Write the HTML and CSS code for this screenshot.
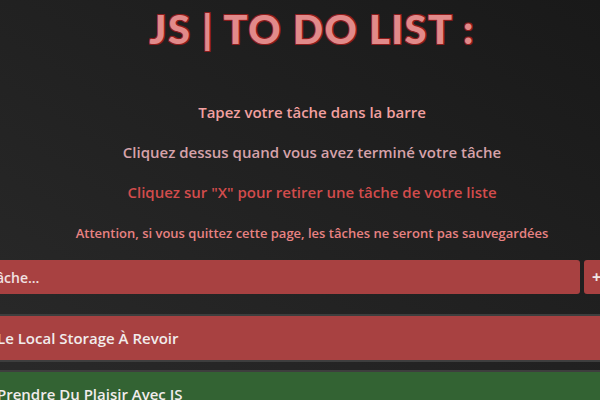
FILE: index.html
```html
<!DOCTYPE html>
<html lang="fr">
<head>
<meta charset="utf-8">
<title>JS | TO DO LIST</title>
<link rel="stylesheet" href="styles.css">
</head>
<body>
<main class="page">
  <header class="intro">
    <h1 class="title">JS | TO DO LIST :</h1>
    <p class="line line-1">Tapez votre tâche dans la barre</p>
    <p class="line line-2">Cliquez dessus quand vous avez terminé votre tâche</p>
    <p class="line line-3">Cliquez sur "X" pour retirer une tâche de votre liste</p>
    <p class="line line-4">Attention, si vous quittez cette page, les tâches ne seront pas sauvegardées</p>
  </header>
  <section class="todo">
    <form class="add-form">
      <input class="add-input" type="text" placeholder="Tâche...">
      <button class="add-btn" type="button">+</button>
    </form>
    <ul class="tasks">
      <li class="task task-todo">Le Local Storage À Revoir</li>
      <li class="task task-done">Prendre Du Plaisir Avec JS</li>
    </ul>
  </section>
</main>
</body>
</html>
```
FILE: styles.css
```css
html, body {
  margin: 0;
  padding: 0;
}
body {
  width: 600px;
  height: 400px;
  overflow: hidden;
  background: linear-gradient(to top right, #2a2a2a 0%, #222 45%, #191919 100%);
  font-family: "Open Sans", "Liberation Sans", sans-serif;
}
.page {
  width: 624px;
}
.intro {
  text-align: center;
}
.title {
  margin: 0;
  padding-top: 7px;
  font-family: Lato, "Open Sans", sans-serif;
  font-weight: 900;
  font-size: 40px;
  line-height: 44px;
  letter-spacing: 1.3px;
  color: #e28a8a;
  text-shadow: 1px 1px 0 #8a1c1c, -1px -1px 0 #8a1c1c, 1px -1px 0 #8a1c1c, -1px 1px 0 #8a1c1c;
}
.line {
  margin: 0;
  font-weight: 600;
  font-size: 15px;
  line-height: 20px;
}
.line-1 {
  margin-top: 51px;
  color: #f2a0a0;
}
.line-2 {
  margin-top: 20px;
  color: #d6a2aa;
}
.line-3 {
  margin-top: 20px;
  color: #d24c4c;
}
.line-4 {
  margin-top: 21px;
  font-size: 13px;
  color: #e88282;
}
.todo {
  margin-left: -22px;
  margin-top: 17px;
}
.add-form {
  display: flex;
  gap: 4px;
  margin: 0;
}
.add-input {
  width: 603px;
  height: 34px;
  box-sizing: border-box;
  border: none;
  border-radius: 3px;
  padding: 0 10px;
  background: #a84141;
  color: #f3e6e6;
  font-family: "Open Sans", "Liberation Sans", sans-serif;
  font-weight: 600;
  font-size: 14px;
}
.add-input::placeholder {
  color: #f1e2e2;
  opacity: 1;
}
.add-btn {
  width: 40px;
  height: 34px;
  border: none;
  border-radius: 3px;
  padding: 0 0 0 8px;
  text-align: left;
  background: #a84141;
  color: #f0e6e6;
  font-family: "Open Sans", "Liberation Sans", sans-serif;
  font-weight: 700;
  font-size: 16px;
}
.tasks {
  list-style: none;
  margin: 20px 0 0;
  padding: 0;
  width: 660px;
}
.task {
  box-sizing: border-box;
  height: 48px;
  padding: 0 19px;
  border-top: 2px solid #3e3e3e;
  border-bottom: 2px solid #3e3e3e;
  display: flex;
  align-items: center;
  color: #f1ecec;
  font-weight: 600;
  font-size: 15px;
}
.task + .task {
  margin-top: 8px;
}
.task-todo {
  background: #a84141;
}
.task-done {
  background: #336333;
}
```
